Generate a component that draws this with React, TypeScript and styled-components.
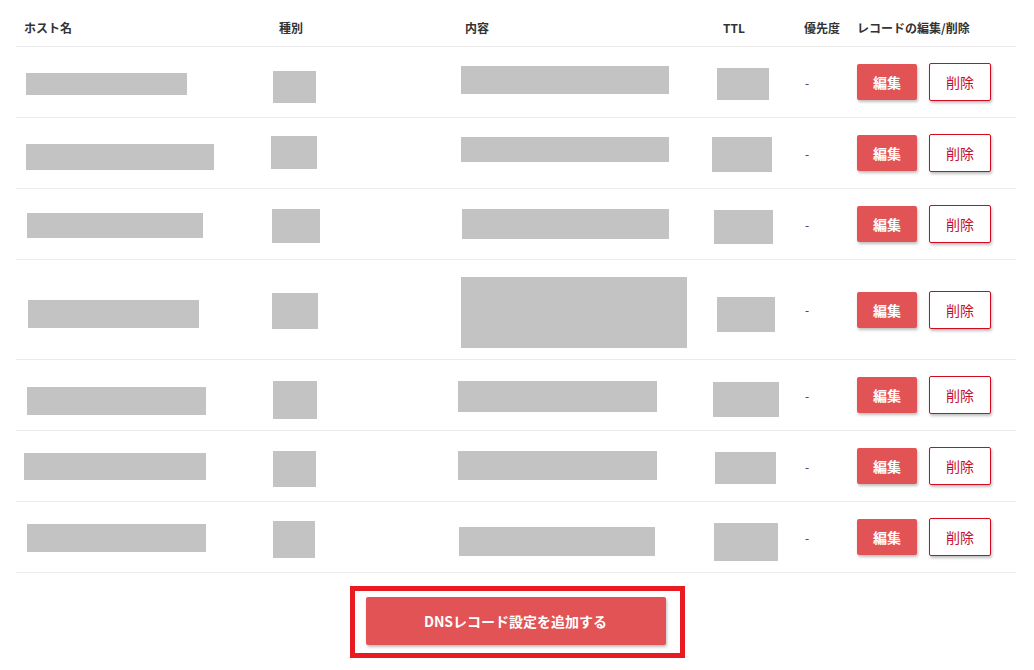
import React from "react";
import styled, { createGlobalStyle } from "styled-components";

const GlobalStyle = createGlobalStyle`
  html, body { margin: 0; padding: 0; background: #fff; }
  body {
    font-family: "Noto Sans CJK JP", "Noto Sans", "Liberation Sans", sans-serif;
    color: #333;
  }
`;

const Page = styled.div`
  padding: 0 18px 0 16px;
  width: 1000px;
`;

const Row = styled.div<{ $h: number; $header?: boolean }>`
  display: grid;
  grid-template-columns: 255px 186px 258px 81px 53px 167px;
  height: ${(p) => p.$h}px;
  border-bottom: 1px solid #ebebeb;
  box-sizing: content-box;
  ${(p) => (p.$header ? "padding-top: 0;" : "")}
`;

const HeadCell = styled.div`
  display: flex;
  align-items: center;
  padding: 8px 8px 0;
  font-size: 12px;
  font-weight: 700;
  color: #333;
  white-space: nowrap;
`;

const Cell = styled.div`
  display: flex;
  align-items: flex-start;
  padding: 0 8px;
  min-width: 0;
`;

const CenterCell = styled(Cell)`
  align-items: center;
`;

const Mask = styled.div<{ $w: number; $h: number; $x: number; $y: number }>`
  flex: none;
  background: #c3c3c3;
  width: ${(p) => p.$w}px;
  height: ${(p) => p.$h}px;
  margin-left: ${(p) => p.$x}px;
  margin-top: ${(p) => p.$y}px;
`;

const Dash = styled.span`
  font-size: 12px;
  color: #333;
  padding-left: 1px;
`;

const Actions = styled(CenterCell)`
  gap: 12px;
`;

const EditButton = styled.button`
  width: 60px;
  height: 36px;
  border: none;
  border-radius: 2px;
  background: #e25355;
  color: #fff;
  font-family: inherit;
  font-size: 14px;
  font-weight: 700;
  box-shadow: 1px 2px 3px rgba(0, 0, 0, 0.25);
  cursor: pointer;
  padding: 0;
`;

const DeleteButton = styled.button`
  width: 62px;
  height: 38px;
  border: 1px solid #d3091f;
  border-radius: 2px;
  background: #fff;
  color: #c8102e;
  font-family: inherit;
  font-size: 14px;
  font-weight: 400;
  box-shadow: 1px 2px 3px rgba(0, 0, 0, 0.25);
  cursor: pointer;
  padding: 0;
`;

const Footer = styled.div`
  display: flex;
  justify-content: center;
  padding-top: 13px;
  padding-left: 2px;
`;

const Highlight = styled.div`
  border: 5px solid #ea1a22;
  padding: 6px 14px 8px 11px;
`;

const AddButton = styled.button`
  width: 300px;
  height: 48px;
  border: none;
  border-radius: 2px;
  background: #e25355;
  color: #fff;
  font-family: inherit;
  font-size: 14px;
  font-weight: 700;
  box-shadow: 1px 2px 3px rgba(0, 0, 0, 0.25);
  cursor: pointer;
`;

type M = [number, number, number, number]; // w, h, x, y

type Rec = { h: number; host: M; type: M; content: M; ttl: M };

const records: Rec[] = [
  { h: 70, host: [161, 22, 2, 26], type: [43, 32, -6, 24], content: [208, 28, -4, 19], ttl: [52, 32, -6, 21] },
  { h: 70, host: [188, 26, 2, 26], type: [46, 33, -8, 18], content: [208, 25, -4, 19], ttl: [60, 35, -11, 19] },
  { h: 70, host: [176, 25, 3, 24], type: [48, 34, -7, 20], content: [207, 30, -3, 20], ttl: [59, 34, -9, 21] },
  { h: 99, host: [171, 28, 4, 40], type: [46, 36, -7, 33], content: [226, 71, -4, 17], ttl: [58, 35, -6, 37] },
  { h: 70, host: [179, 28, 3, 27], type: [44, 38, -6, 21], content: [199, 31, -7, 21], ttl: [66, 35, -10, 22] },
  { h: 70, host: [182, 27, 0, 22], type: [43, 36, -6, 20], content: [199, 29, -7, 20], ttl: [61, 32, -8, 21] },
  { h: 70, host: [179, 28, 3, 22], type: [42, 37, -6, 19], content: [196, 29, -6, 25], ttl: [64, 38, -9, 21] },
];

const Block = ({ m }: { m: M }) => <Mask $w={m[0]} $h={m[1]} $x={m[2]} $y={m[3]} />;

export default function App() {
  return (
    <>
      <GlobalStyle />
      <Page>
        <Row $h={46} $header>
          <HeadCell>ホスト名</HeadCell>
          <HeadCell>種別</HeadCell>
          <HeadCell>内容</HeadCell>
          <HeadCell>TTL</HeadCell>
          <HeadCell>優先度</HeadCell>
          <HeadCell>レコードの編集/削除</HeadCell>
        </Row>
        {records.map((r, i) => (
          <Row key={i} $h={r.h}>
            <Cell><Block m={r.host} /></Cell>
            <Cell><Block m={r.type} /></Cell>
            <Cell><Block m={r.content} /></Cell>
            <Cell><Block m={r.ttl} /></Cell>
            <CenterCell><Dash>-</Dash></CenterCell>
            <Actions>
              <EditButton>編集</EditButton>
              <DeleteButton>削除</DeleteButton>
            </Actions>
          </Row>
        ))}
        <Footer>
          <Highlight>
            <AddButton>DNSレコード設定を追加する</AddButton>
          </Highlight>
        </Footer>
      </Page>
    </>
  );
}
